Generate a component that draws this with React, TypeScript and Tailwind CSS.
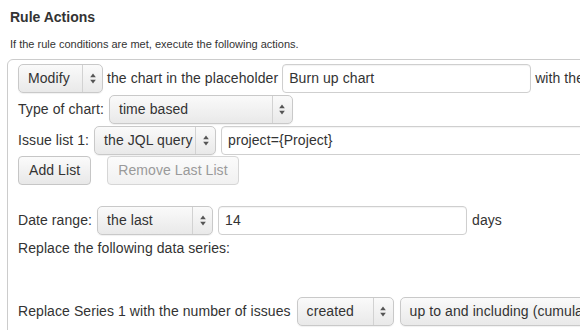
import React from 'react';

function Arrows() {
  return (
    <svg width="6" height="11" viewBox="0 0 6 11" className="shrink-0">
      <path d="M3 0.5 L5.8 4.3 L0.2 4.3 Z" fill="#555" />
      <path d="M3 10.5 L5.8 6.7 L0.2 6.7 Z" fill="#555" />
    </svg>
  );
}

function Select({ label, width, disabled }: { label: string; width: string; disabled?: boolean }) {
  return (
    <div
      className={`${width} h-[29px] shrink-0 flex items-stretch rounded-[5px] border border-[#c9c9c9] bg-gradient-to-b from-[#fafafa] to-[#e9e9e9] shadow-[0_1px_1px_rgba(0,0,0,0.06)]`}
    >
      <span className={`flex-1 flex items-center pl-[9px] whitespace-nowrap overflow-hidden ${disabled ? 'text-[#999]' : ''}`}>
        {label}
      </span>
      <span className="w-[20px] shrink-0 flex items-center justify-center border-l border-[#d2d2d2]">
        <Arrows />
      </span>
    </div>
  );
}

function Input({ value, width }: { value: string; width: string }) {
  return (
    <div
      className={`${width} h-[29px] shrink-0 flex items-center pl-[6px] rounded-[4px] border border-[#cfcfcf] bg-white shadow-[inset_0_1px_1px_rgba(0,0,0,0.05)] whitespace-nowrap`}
    >
      {value}
    </div>
  );
}

function Button({ label, disabled }: { label: string; disabled?: boolean }) {
  return (
    <div
      className={`h-[29px] px-[10px] flex items-center rounded-[4px] border whitespace-nowrap ${
        disabled
          ? 'border-[#d6d6d6] bg-gradient-to-b from-[#fbfbfb] to-[#f1f1f1] text-[#9a9a9a]'
          : 'border-[#c6c6c6] bg-gradient-to-b from-[#fbfbfb] to-[#e8e8e8] text-[#333]'
      }`}
    >
      {label}
    </div>
  );
}

export default function App() {
  return (
    <div
      className="w-[580px] h-[330px] overflow-hidden bg-white text-[#333]"
      style={{ fontFamily: '"Liberation Sans", Arial, sans-serif' }}
    >
      <div className="px-[10px] pt-[7px]">
        <h2 className="text-[14px] leading-[20px] font-bold text-[#333]">Rule Actions</h2>
        <p className="mt-[10px] text-[11px] leading-[14px] text-[#333]">
          If the rule conditions are met, execute the following actions.
        </p>
      </div>

      <div className="ml-[7px] mt-[8px] w-[620px] h-[300px] rounded-tl-[6px] border border-[#cccccc] pl-[10px] pt-[4px] text-[14px] tracking-[0.08px]">
        {/* Chart row */}
        <div className="flex items-center gap-[4px] whitespace-nowrap">
          <Select label="Modify" width="w-[85px]" />
          <span>the chart in the placeholder</span>
          <Input value="Burn up chart" width="w-[249px]" />
          <span>with the</span>
        </div>

        <div className="mt-[2px] flex items-center gap-[5px] whitespace-nowrap">
          <span>Type of chart:</span>
          <Select label="time based" width="w-[184px]" />
        </div>

        <div className="mt-[2px] flex items-center gap-[5px] whitespace-nowrap">
          <span>Issue list 1:</span>
          <Select label="the JQL query" width="w-[122px]" />
          <Input value="project={Project}" width="w-[400px]" />
        </div>

        <div className="mt-[1px] flex items-center gap-[16px]">
          <Button label="Add List" />
          <Button label="Remove Last List" disabled />
        </div>

        {/* Date range */}
        <div className="mt-[21px] flex items-center gap-[5px] whitespace-nowrap">
          <span>Date range:</span>
          <Select label="the last" width="w-[116px]" />
          <Input value="14" width="w-[249px]" />
          <span>days</span>
        </div>

        <p className="mt-[3px] leading-[20px]">Replace the following data series:</p>

        <div className="mt-[39px] flex items-center gap-[6px] whitespace-nowrap">
          <span>Replace Series 1 with the number of issues</span>
          <Select label="created" width="w-[97px]" />
          <Select label="up to and including (cumulative)" width="w-[260px]" />
        </div>
      </div>
    </div>
  );
}
